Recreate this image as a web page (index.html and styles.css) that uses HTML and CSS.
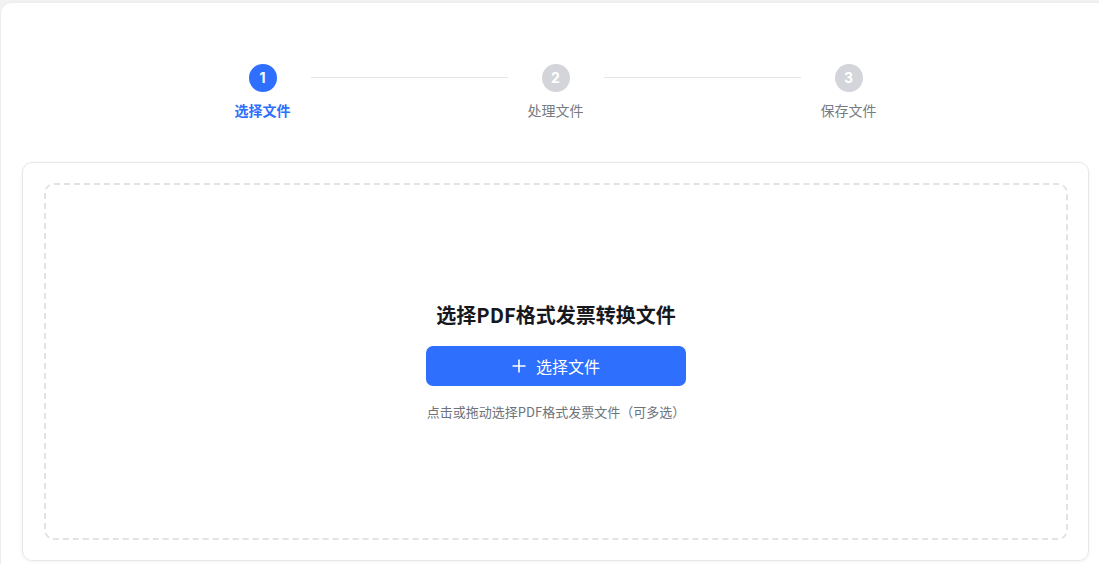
FILE: index.html
```html
<!DOCTYPE html>
<html lang="zh">
<head>
<meta charset="utf-8">
<title>PDF发票转换</title>
<link rel="stylesheet" href="styles.css">
</head>
<body>
<div class="page">
  <div class="steps">
    <div class="step active">
      <div class="dot">1</div>
      <div class="label">选择文件</div>
    </div>
    <div class="line"></div>
    <div class="step">
      <div class="dot">2</div>
      <div class="label">处理文件</div>
    </div>
    <div class="line"></div>
    <div class="step">
      <div class="dot">3</div>
      <div class="label">保存文件</div>
    </div>
  </div>
  <div class="panel">
    <div class="drop">
      <div class="title">选择PDF格式发票转换文件</div>
      <button class="btn">
        <svg class="plus" width="14" height="14" viewBox="0 0 14 14"><path d="M7 0.5V13.5M0.5 7H13.5" stroke="currentColor" stroke-width="1.6" fill="none"/></svg>
        <span>选择文件</span>
      </button>
      <div class="hint">点击或拖动选择PDF格式发票文件（可多选）</div>
    </div>
  </div>
</div>
</body>
</html>
```
FILE: styles.css
```css
html, body {
  margin: 0;
  padding: 0;
  height: 100%;
  overflow: hidden;
  background: #f2f2f3;
  font-family: "Noto Sans CJK SC", "Noto Sans", sans-serif;
}
.page {
  box-sizing: border-box;
  width: 1109px;
  margin: 3px 0 0 1px;
  padding: 61px 21px 20px;
  background: #fff;
  border-radius: 10px;
  box-shadow: 0 0 3px rgba(0, 0, 0, 0.06);
}
.steps {
  display: flex;
  justify-content: center;
  align-items: flex-start;
  margin-bottom: 42px;
}
.step {
  width: 80px;
  display: flex;
  flex-direction: column;
  align-items: center;
}
.dot {
  width: 28px;
  height: 28px;
  border-radius: 50%;
  background: #d3d5da;
  color: #fff;
  font-family: "Inter", "Noto Sans", sans-serif;
  font-weight: 700;
  font-size: 14px;
  line-height: 28px;
  text-align: center;
}
.label {
  margin-top: 8px;
  font-size: 14px;
  line-height: 20px;
  color: #777b82;
  white-space: nowrap;
}
.step.active .dot {
  background: #2e6ffd;
}
.step.active .label {
  color: #2e6ffd;
  font-weight: 700;
}
.line {
  width: 197px;
  height: 1px;
  background: #e4e5e8;
  margin: 13px 8px 0;
}
.panel {
  border: 1px solid #e6e7ea;
  border-radius: 10px;
  padding: 20px 20px 20px 21px;
  box-shadow: 0 1px 4px rgba(0, 0, 0, 0.05);
}
.drop {
  height: 353px;
  border: 2px dashed #e1e3e7;
  border-radius: 10px;
  display: flex;
  flex-direction: column;
  align-items: center;
  justify-content: center;
}
.title {
  font-size: 20px;
  line-height: 28px;
  font-weight: 700;
  color: #16181d;
}
.btn {
  margin-top: 17px;
  width: 260px;
  height: 40px;
  border: none;
  border-radius: 7px;
  background: #2e6ffd;
  color: #fff;
  font-family: inherit;
  font-size: 16px;
  display: flex;
  align-items: center;
  justify-content: center;
  gap: 10px;
  padding: 0;
}
.plus {
  display: block;
}
.hint {
  margin-top: 16px;
  font-size: 13px;
  line-height: 20px;
  color: #6e7279;
}
```
